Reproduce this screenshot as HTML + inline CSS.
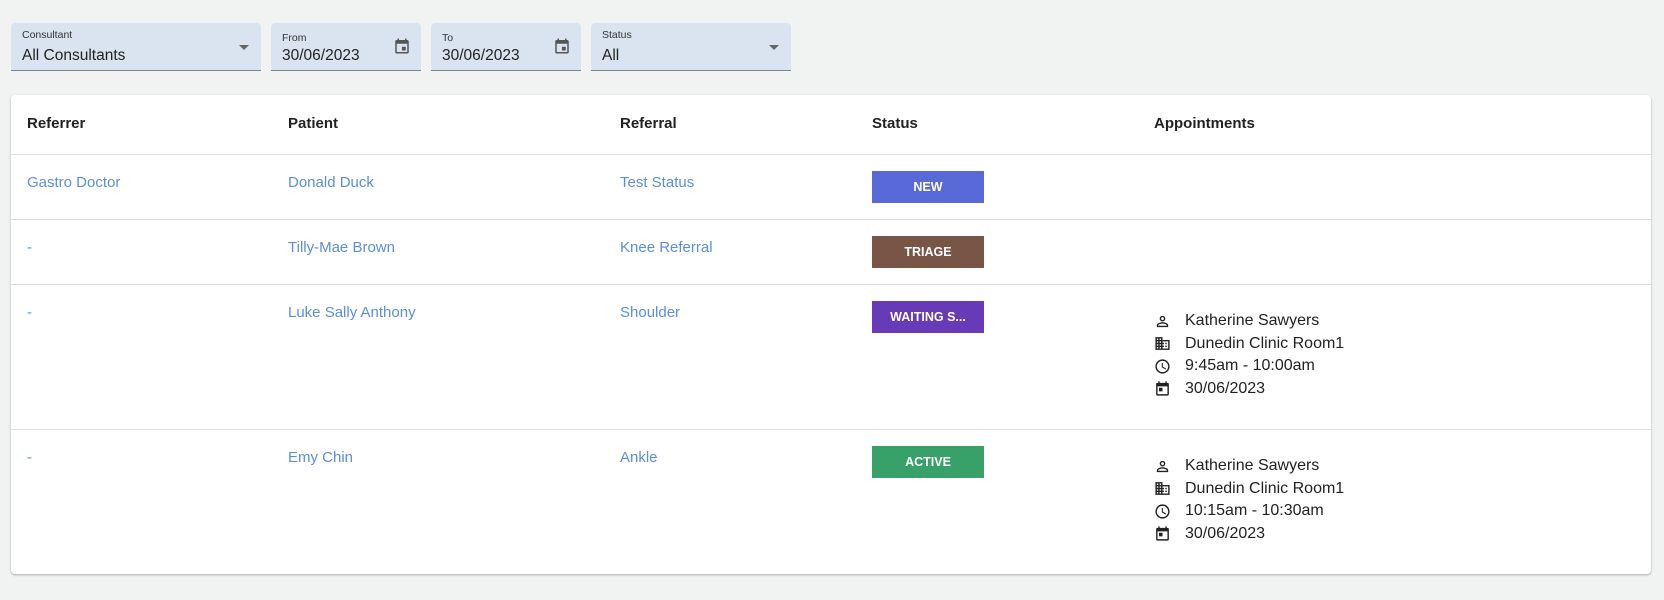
<!DOCTYPE html>
<html><head><meta charset="utf-8"><style>
*{box-sizing:border-box;margin:0;padding:0}
body{width:1664px;height:600px;background:#f1f3f2;font-family:"Liberation Sans",sans-serif;position:relative;overflow:hidden}
.f{position:absolute;top:23px;height:48px;background:#d9e4f0;border-bottom:1px solid #7a8594;border-radius:4px 4px 0 0}
.f .l{position:absolute;left:11px;top:6px;font-size:10.5px;color:#333}
.f .v{position:absolute;left:11px;top:24px;font-size:15.5px;color:#222}
.arr{position:absolute;top:22px;width:0;height:0;border-left:5px solid transparent;border-right:5px solid transparent;border-top:5px solid #666}
.cal{position:absolute;top:14px}
.card{position:absolute;left:11px;top:95px;width:1640px;height:479px;background:#fff;border-radius:4px;box-shadow:0 1px 2px rgba(0,0,0,.3)}
.t{position:absolute;font-size:15px}
.h{font-weight:bold;color:#222;top:115px}
.a{color:#5b8fdc}
.hr{position:absolute;left:11px;width:1640px;height:1px;background:#e0e0e0}
.b{position:absolute;left:872px;width:112px;height:32px;color:#fff;font-weight:bold;font-size:12.5px;text-align:center;line-height:32px}
.ap{position:absolute;left:1154px;font-size:16px;color:#222}
.ap div{height:22.5px;display:flex;align-items:center}
.ap svg{width:17px;height:17px;margin-right:14px}
</style></head><body>
<div class="f" style="left:11px;width:250px"><div class="l">Consultant</div><div class="v">All Consultants</div><div class="arr" style="left:228px"></div></div>
<div class="f" style="left:271px;width:150px"><div class="l" style="top:9px">From</div><div class="v">30/06/2023</div>
<svg class="cal" style="left:122px" width="18" height="18" viewBox="0 0 24 24"><path fill="#555" d="M19 4h-1V2h-2v2H8V2H6v2H5a2 2 0 0 0-2 2v14a2 2 0 0 0 2 2h14a2 2 0 0 0 2-2V6a2 2 0 0 0-2-2zm0 16H5V9h14zm-7-7h5v5h-5z"/></svg></div>
<div class="f" style="left:431px;width:150px"><div class="l" style="top:9px">To</div><div class="v">30/06/2023</div>
<svg class="cal" style="left:122px" width="18" height="18" viewBox="0 0 24 24"><path fill="#555" d="M19 4h-1V2h-2v2H8V2H6v2H5a2 2 0 0 0-2 2v14a2 2 0 0 0 2 2h14a2 2 0 0 0 2-2V6a2 2 0 0 0-2-2zm0 16H5V9h14zm-7-7h5v5h-5z"/></svg></div>
<div class="f" style="left:591px;width:200px"><div class="l">Status</div><div class="v">All</div><div class="arr" style="left:178px"></div></div>
<div class="card"></div>
<div class="t h" style="left:27px">Referrer</div><div class="t h" style="left:288px">Patient</div><div class="t h" style="left:620px">Referral</div><div class="t h" style="left:872px">Status</div><div class="t h" style="left:1154px">Appointments</div>
<div class="hr" style="top:154px"></div><div class="hr" style="top:219px"></div><div class="hr" style="top:284px"></div><div class="hr" style="top:429px"></div>
<div class="t a" style="left:27px;top:174px">Gastro Doctor</div><div class="t a" style="left:288px;top:174px">Donald Duck</div><div class="t a" style="left:620px;top:174px">Test Status</div>
<div class="b" style="top:171px;background:#5a69d8">NEW</div>
<div class="t a" style="left:27px;top:239px">-</div><div class="t a" style="left:288px;top:239px">Tilly-Mae Brown</div><div class="t a" style="left:620px;top:239px">Knee Referral</div>
<div class="b" style="top:236px;background:#795548">TRIAGE</div>
<div class="t a" style="left:27px;top:304px">-</div><div class="t a" style="left:288px;top:304px">Luke Sally Anthony</div><div class="t a" style="left:620px;top:304px">Shoulder</div>
<div class="b" style="top:301px;background:#673ab7">WAITING S...</div>
<div class="t a" style="left:27px;top:449px">-</div><div class="t a" style="left:288px;top:449px">Emy Chin</div><div class="t a" style="left:620px;top:449px">Ankle</div>
<div class="b" style="top:446px;background:#38a169">ACTIVE</div>
<div class="ap" style="top:310px">
<div><svg viewBox="0 0 24 24"><path fill="#222" d="M12 4a4 4 0 1 0 0 8 4 4 0 0 0 0-8zm0 2a2 2 0 1 1 0 4 2 2 0 0 1 0-4zm0 7c-2.7 0-8 1.3-8 4v3h16v-3c0-2.7-5.3-4-8-4zm-6 5v-1c.2-.7 3.3-2 6-2s5.8 1.3 6 2v1z"/></svg>Katherine Sawyers</div>
<div><svg viewBox="0 0 24 24"><path fill="#222" d="M12 7V3H2v18h20V7zM6 19H4v-2h2zm0-4H4v-2h2zm0-4H4V9h2zm0-4H4V5h2zm4 12H8v-2h2zm0-4H8v-2h2zm0-4H8V9h2zm0-4H8V5h2zm10 12h-8v-2h2v-2h-2v-2h2v-2h-2V9h8zm-2-8h-2v2h2zm0 4h-2v2h2z"/></svg>Dunedin Clinic Room1</div>
<div><svg viewBox="0 0 24 24"><path fill="#222" d="M12 2a10 10 0 1 0 0 20 10 10 0 0 0 0-20zm0 18a8 8 0 1 1 0-16 8 8 0 0 1 0 16zm.5-13H11v6l5.2 3.2.8-1.3-4.5-2.7z"/></svg>9:45am - 10:00am</div>
<div><svg viewBox="0 0 24 24"><path fill="#222" d="M19 4h-1V2h-2v2H8V2H6v2H5a2 2 0 0 0-2 2v14a2 2 0 0 0 2 2h14a2 2 0 0 0 2-2V6a2 2 0 0 0-2-2zm0 16H5V9h14zM7 11h5v5H7z"/></svg>30/06/2023</div>
</div>
<div class="ap" style="top:455px">
<div><svg viewBox="0 0 24 24"><path fill="#222" d="M12 4a4 4 0 1 0 0 8 4 4 0 0 0 0-8zm0 2a2 2 0 1 1 0 4 2 2 0 0 1 0-4zm0 7c-2.7 0-8 1.3-8 4v3h16v-3c0-2.7-5.3-4-8-4zm-6 5v-1c.2-.7 3.3-2 6-2s5.8 1.3 6 2v1z"/></svg>Katherine Sawyers</div>
<div><svg viewBox="0 0 24 24"><path fill="#222" d="M12 7V3H2v18h20V7zM6 19H4v-2h2zm0-4H4v-2h2zm0-4H4V9h2zm0-4H4V5h2zm4 12H8v-2h2zm0-4H8v-2h2zm0-4H8V9h2zm0-4H8V5h2zm10 12h-8v-2h2v-2h-2v-2h2v-2h-2V9h8zm-2-8h-2v2h2zm0 4h-2v2h2z"/></svg>Dunedin Clinic Room1</div>
<div><svg viewBox="0 0 24 24"><path fill="#222" d="M12 2a10 10 0 1 0 0 20 10 10 0 0 0 0-20zm0 18a8 8 0 1 1 0-16 8 8 0 0 1 0 16zm.5-13H11v6l5.2 3.2.8-1.3-4.5-2.7z"/></svg>10:15am - 10:30am</div>
<div><svg viewBox="0 0 24 24"><path fill="#222" d="M19 4h-1V2h-2v2H8V2H6v2H5a2 2 0 0 0-2 2v14a2 2 0 0 0 2 2h14a2 2 0 0 0 2-2V6a2 2 0 0 0-2-2zm0 16H5V9h14zM7 11h5v5H7z"/></svg>30/06/2023</div>
</div>
</body></html>
